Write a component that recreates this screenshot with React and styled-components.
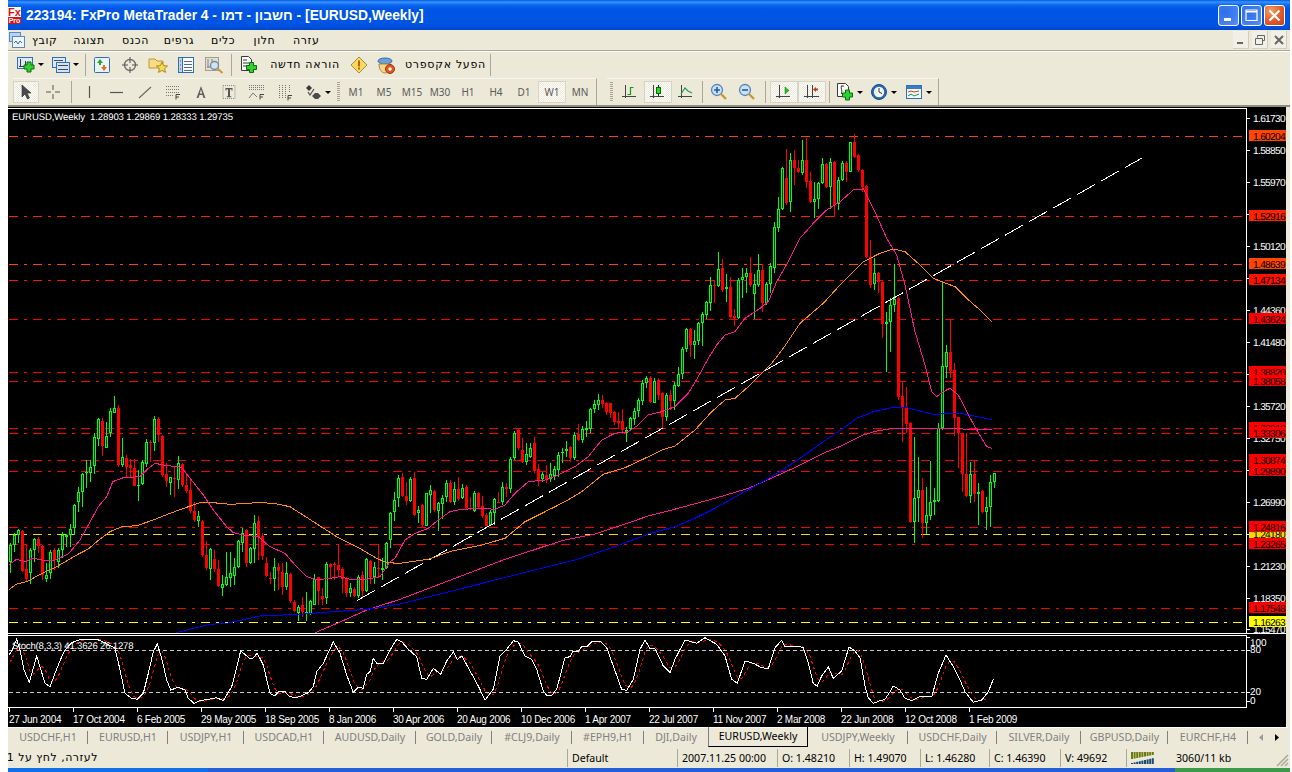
import React from 'react'
import styled, { createGlobalStyle } from 'styled-components'

const GlobalStyle = createGlobalStyle`
  html, body { margin: 0; padding: 0; background: #ffffff; }
  body { font-family: "Noto Sans", "Liberation Sans", sans-serif; }
`

const FONT = '"Noto Sans", "Liberation Sans", sans-serif'
const HEBREW = '"DejaVu Sans", "Liberation Sans", sans-serif'
const BEIGE = '#ece9d8'
const EDGE = '#aca899'

const Page = styled.div`
  width: 1292px;
  height: 772px;
  overflow: hidden;
  background: #ffffff;
`
const Window = styled.div`
  margin-left: 8px;
  width: 1282px;
  height: 772px;
  display: flex;
  flex-direction: column;
  background: ${BEIGE};
`
const TitleBar = styled.div`
  height: 30px;
  flex: none;
  display: flex;
  align-items: center;
  padding-right: 5px;
  box-sizing: border-box;
  background: linear-gradient(#0058e6 0, #3a93ff 2px, #0a66f0 5px, #0055e5 9px, #0055e5 22px, #0050dd 27px, #0046c8 30px);
`
const Logo = styled.div`
  width: 13px;
  height: 17px;
  margin-right: 5px;
  display: flex;
  flex-direction: column;
  font-family: "Liberation Sans", sans-serif;
  font-weight: 700;
  text-align: center;
`
const LogoTop = styled.span`
  height: 10px;
  line-height: 10px;
  font-size: 11px;
  background: #ffffff;
  color: #e01010;
`
const LogoBottom = styled.span`
  height: 7px;
  line-height: 7px;
  font-size: 7px;
  background: #e01010;
  color: #ffffff;
`
const TitleText = styled.div`
  flex: 1;
  font: 700 13.8px "Liberation Sans", sans-serif;
  color: #ffffff;
  white-space: nowrap;
`
const CaptionButton = styled.div`
  width: 21px;
  height: 21px;
  margin-left: 2px;
  box-sizing: border-box;
  border: 1px solid #ffffff;
  border-radius: 3px;
  background: ${(p) => (p.$close ? 'radial-gradient(circle at 30% 25%, #eea060, #e2592a 55%, #c8401a)' : 'radial-gradient(circle at 30% 30%, #2f6ee8, #3d7cf0 50%, #5a93f5)')};
  display: flex;
  align-items: center;
  justify-content: center;
`
const MenuBar = styled.div`
  height: 20px;
  flex: none;
  display: flex;
  align-items: center;
  padding-left: 1px;
  font: 11px ${HEBREW};
  letter-spacing: 0.6px;
  color: #000000;
`
const MenuItem = styled.span`
  margin-left: ${(p) => p.$gap}px;
  width: ${(p) => p.$w}px;
  text-align: center;
  white-space: nowrap;
`
const MdiButtons = styled.div`
  margin-left: auto;
  margin-right: 3px;
  display: flex;
  gap: 3px;
`
const MdiButton = styled.div`
  width: 15px;
  height: 17px;
  background: #f2f0e6;
  border-right: 1px solid #d0cdbc;
  border-bottom: 1px solid #d0cdbc;
  display: flex;
  align-items: center;
  justify-content: center;
`
const ToolRow = styled.div`
  flex: none;
  height: ${(p) => p.$h}px;
  box-sizing: border-box;
  display: flex;
  align-items: center;
  padding-left: 5px;
  border-top: ${(p) => (p.$top ? `1px solid ${EDGE}` : 'none')};
  box-shadow: ${(p) => (p.$top ? 'inset 0 1px 0 #ffffff' : 'none')};
  border-bottom: ${(p) => (p.$bottom ? '2px solid #8f8d80' : 'none')};
`
const ToolGroup = styled.div`
  display: flex;
  align-items: center;
  height: 27px;
  margin-left: ${(p) => p.$gap || 0}px;
  padding-right: ${(p) => p.$pad || 0}px;
  border-top: 1px solid #f6f5ee;
  border-right: ${(p) => (p.$end ? `1px solid ${EDGE}` : 'none')};
  box-sizing: border-box;
`
const ToolButton = styled.div`
  flex: none;
  width: ${(p) => p.$w || 28}px;
  height: 22px;
  margin-left: ${(p) => p.$gap || 0}px;
  box-sizing: border-box;
  display: flex;
  align-items: center;
  justify-content: center;
  gap: 3px;
  font: 10px ${FONT};
  color: #5a5a5a;
  ${(p) =>
    p.$active &&
    `
    background: repeating-conic-gradient(#ffffff 0 25%, #ece9d8 0 50%) 0 0 / 2px 2px;
    border: 2px solid #f4f3ec;
    outline: 1px solid #d6d3c4;
    outline-offset: -1px;
  `}
`
const TextButton = styled.div`
  flex: none;
  width: ${(p) => p.$w}px;
  margin-left: ${(p) => p.$gap || 0}px;
  font: 11px ${HEBREW};
  letter-spacing: 0.7px;
  color: #000000;
  text-align: center;
  white-space: nowrap;
`
const Separator = styled.div`
  flex: none;
  width: 1px;
  height: 22px;
  margin: 0 ${(p) => p.$m || 3}px;
  background: ${EDGE};
`
const Grip = styled.div`
  flex: none;
  width: 3px;
  height: 20px;
  margin: 0 ${(p) => p.$m || 2}px;
  background: repeating-linear-gradient(#a8a594 0 1px, transparent 1px 2px);
`
const Caret = styled.span`
  width: 0;
  height: 0;
  border-left: 3px solid transparent;
  border-right: 3px solid transparent;
  border-top: 3px solid #000000;
`
const ChartArea = styled.div`
  flex: none;
  width: 1278px;
  background: #000000;
  display: flex;
  flex-direction: column;
`
const Plot = styled.svg`
  display: block;
  shape-rendering: crispEdges;
`
const PlotText = styled.text`
  font: ${(p) => p.$size || 10}px "Liberation Sans", sans-serif;
  letter-spacing: ${(p) => p.$track || 0}px;
  fill: ${(p) => p.$fill || '#ffffff'};
  text-rendering: geometricPrecision;
`
const TimeAxis = styled.div`
  height: 19px;
  display: flex;
  padding-left: 1px;
  overflow: hidden;
`
const TimeCell = styled.div`
  position: relative;
  flex: none;
  width: 64px;
  padding-top: 5px;
  font: 10px/13px "Liberation Sans", sans-serif;
  letter-spacing: -0.25px;
  color: #ffffff;
  white-space: nowrap;
  &::before {
    content: '';
    position: absolute;
    left: 0;
    top: 0;
    width: 1px;
    height: 4px;
    background: #ffffff;
  }
`
const TabBar = styled.div`
  flex: none;
  height: 20px;
  width: 1280px;
  box-sizing: border-box;
  display: flex;
  align-items: stretch;
  border-top: 1px solid #ffffff;
  background: ${BEIGE};
  font: 10.6px/18px ${FONT};
`
const Tab = styled.div`
  flex: none;
  width: ${(p) => p.$w}px;
  box-sizing: border-box;
  text-align: center;
  white-space: nowrap;
  color: #808080;
  position: relative;
  ${(p) =>
    p.$sep &&
    `
    &::after {
      content: '';
      position: absolute;
      right: 0;
      top: 3px;
      width: 1px;
      height: 13px;
      background: #808080;
    }
  `}
  ${(p) =>
    p.$active &&
    `
    background: #ffffff;
    color: #000000;
    margin-top: -1px;
    height: 20px;
    border-right: 1px solid #000000;
    border-bottom: 1px solid #000000;
    border-left: 1px solid #808080;
    line-height: 19px;
  `}
`
const TabArrows = styled.div`
  flex: none;
  display: flex;
  align-items: center;
  gap: 12px;
  margin-left: 11px;
`
const StatusBar = styled.div`
  flex: none;
  height: 21px;
  width: 1282px;
  display: flex;
  align-items: center;
  font: 10.6px/20px ${FONT};
  color: #000000;
  white-space: nowrap;
  position: relative;
`
const StatusCell = styled.div`
  flex: none;
  width: ${(p) => p.$w}px;
  height: 18px;
  line-height: 18px;
  box-sizing: border-box;
  padding-left: 4px;
  border-left: 1px solid ${EDGE};
  display: flex;
  align-items: center;
`
const HelpText = styled.div`
  flex: none;
  width: 559px;
  height: 18px;
  line-height: 18px;
  overflow: hidden;
  display: flex;
  font-family: ${HEBREW};
  font-size: 11px;
  letter-spacing: 0.5px;
`
const HelpInner = styled.div`
  direction: rtl;
  width: 90px;
  flex: none;
  white-space: nowrap;
`
const SizeGrip = styled.svg`
  position: absolute;
  right: 1px;
  bottom: 1px;
`
const TaskStrip = styled.div`
  flex: none;
  height: 4px;
  display: flex;
  width: 1282px;
`
const TaskPart = styled.div`
  flex: ${(p) => (p.$w ? `none` : 1)};
  width: ${(p) => p.$w || 0}px;
  background: ${(p) => p.$color};
`

// toolbar drawings --------------------------------------------------------
const Ico = ({ w = 18, h = 18, children }) => (
  <svg width={w} height={h} viewBox={`0 0 ${w} ${h}`} style={{ display: 'block' }}>
    {children}
  </svg>
)
const GreenPlus = ({ x, y }) => (
  <path
    d={`M${x + 3} ${y}h4v3h3v4h-3v3h-4v-3h-3v-4h3z`}
    fill="#2fd12f"
    stroke="#0d6b0d"
    strokeWidth="1"
  />
)
const Mini = ({ x, y }) => (
  <g fill="none" stroke="#3a3a3a">
    <path d={`M${x + 1.5} ${y}v8M${x} ${y + 7.5}h10M${x + 6.5} ${y + 2}v5`} />
  </g>
)
const NewChartIcon = () => (
  <Ico>
    <rect x=".5" y="1.5" width="15" height="11" fill="#dbe9fb" stroke="#2f6fb5" />
    <Mini x={2} y={3} />
    <GreenPlus x={7} y={6} />
  </Ico>
)
const ProfilesIcon = () => (
  <Ico>
    <rect x=".5" y="1.5" width="13" height="10" fill="#dbe9fb" stroke="#2f6fb5" />
    <rect x="4.5" y="6.5" width="13" height="10" fill="#cfe2fa" stroke="#2f6fb5" />
    <path d="M6 9.5h10M6 13.5h10" stroke="#4a4a4a" />
    <path d="M2 4.5h9" stroke="#4a4a4a" />
  </Ico>
)
const WatchIcon = () => (
  <Ico>
    <rect x="1.5" y="1.5" width="15" height="15" rx="1" fill="#eaf3fc" stroke="#2f6fb5" />
    <path d="M7 3l3 4H8v2H6V7H4z" fill="#27a827" />
    <path d="M11 15l-3-4h2V9h2v2h2z" fill="#e2701a" />
  </Ico>
)
const CrossTargetIcon = () => (
  <Ico>
    <circle cx="9" cy="9" r="5.5" fill="none" stroke="#707070" strokeWidth="1.4" />
    <path d="M9 1v6M9 11v6M1 9h6M11 9h6" stroke="#555" />
  </Ico>
)
const FolderStarIcon = () => (
  <Ico w={20}>
    <path d="M1 3h6l2 2h6v7H1z" fill="#f6dc82" stroke="#b89a3a" />
    <path d="M14 6l1.6 3.6 3.9.4-2.9 2.6.9 3.8-3.5-2-3.5 2 .9-3.8-2.9-2.6 3.9-.4z" fill="#fbd94a" stroke="#a88a20" />
  </Ico>
)
const NavigatorIcon = () => (
  <Ico>
    <rect x="1.5" y="1.5" width="15" height="15" fill="#f6fafe" stroke="#2f6fb5" />
    <rect x="1.5" y="1.5" width="4" height="15" fill="#bcd6f2" stroke="#2f6fb5" />
    <path d="M7 5.5h8M7 8.5h8M7 11.5h8M7 14.5h8" stroke="#5a6a80" />
    <path d="M3 5h1M3 9h1M3 13h1" stroke="#d02020" />
  </Ico>
)
const TesterIcon = () => (
  <Ico w={19}>
    <rect x=".5" y="1.5" width="13" height="13" fill="#e2e0d4" stroke="#a09e90" />
    <path d="M3 3v9M7 3v9M2 11h10" stroke="#808080" />
    <circle cx="9.5" cy="9.5" r="4" fill="#cfe3f5" stroke="#7a8a9a" strokeWidth="1.4" />
    <path d="M12.5 12.5l5 4.5" stroke="#c89a30" strokeWidth="2" />
  </Ico>
)
const NewOrderIcon = () => (
  <Ico>
    <path d="M1.5.5h7l3 3v11h-10z" fill="#fbfbf8" stroke="#3a3a3a" />
    <path d="M3 4h4M3 7h6M3 10h4" stroke="#3a3a3a" />
    <GreenPlus x={6.5} y={6.5} />
  </Ico>
)
const WarnIcon = () => (
  <Ico>
    <path d="M9 1l8 8-8 8-8-8z" fill="#fbdb5a" stroke="#a08a50" />
    <path d="M8 4.5h2v6H8z" fill="#c85a10" />
    <path d="M8 11.5h2v2H8z" fill="#c85a10" />
  </Ico>
)
const ExpertIcon = () => (
  <Ico w={20}>
    <ellipse cx="9" cy="5" rx="7" ry="3" fill="#6aa0dc" stroke="#3a6aa0" />
    <path d="M3 8c0 6 3 9 6 9s6-3 6-9z" fill="#f5d58a" stroke="#a08a50" />
    <circle cx="14" cy="13" r="4.5" fill="#e0561a" stroke="#9a3a10" />
    <circle cx="14" cy="13" r="1.7" fill="#ffffff" />
  </Ico>
)
const ArrowIcon = () => (
  <Ico>
    <path d="M5 2l0 12 3-3 2.5 5 2-1-2.5-5 4 0z" fill="#4a4a4a" stroke="#2a2a2a" strokeWidth=".6" />
  </Ico>
)
const ThinCrossIcon = () => (
  <Ico>
    <path d="M9 2v5M9 11v5M2 9h5M11 9h5" stroke="#555" />
  </Ico>
)
const VLineIcon = () => (
  <Ico>
    <path d="M9.5 3v12" stroke="#555" strokeWidth="1.2" />
  </Ico>
)
const HLineIcon = () => (
  <Ico>
    <path d="M2 9.5h13" stroke="#555" strokeWidth="1.2" />
  </Ico>
)
const TrendIcon = () => (
  <Ico>
    <path d="M3 15L15 4" stroke="#666" strokeWidth="1.1" />
  </Ico>
)
const ChannelIcon = () => (
  <Ico>
    <path d="M2 3.5h13M2 6.5h13M2 9.5h13M2 12.5h8" stroke="#777" strokeDasharray="1 1" />
    <path d="M12 11.5h4M12 11.5v5M12 14h3" stroke="#444" fill="none" />
  </Ico>
)
const TextAIcon = () => (
  <Ico>
    <path d="M9 3l4.5 12h-2l-1-3h-3l-1 3h-2zM7.8 10.5h2.4L9 6.5z" fill="#606060" />
  </Ico>
)
const TextBoxIcon = () => (
  <Ico>
    <path d="M3 2.5h12v13H3z" fill="none" stroke="#888" strokeDasharray="1 1" />
    <path d="M5.5 5h7v2.5h-1V6.2H10v7h1.2v1H6.8v-1H8v-7H6.500v1.3h-1z" fill="#555" />
  </Ico>
)
const FibIcon = () => (
  <Ico>
    <path d="M1 2.5h15M1 4.5h15M1 6.500h15" stroke="#777" strokeDasharray="1 1" />
    <path d="M1 15l4-5 4 4" fill="none" stroke="#777" />
    <path d="M12 11.5h4M12 11.5v5M12 14h3" stroke="#444" fill="none" />
  </Ico>
)
const FibTimeIcon = () => (
  <Ico>
    <path d="M3.500 2v14M6.500 2v14M9.500 2v14M13.500 2v7" stroke="#777" strokeDasharray="1 1" />
    <path d="M12 12.500h4M12 12.500v5M12 15h3" stroke="#444" fill="none" />
  </Ico>
)
const ArrowsIcon = () => (
  <Ico>
    <path d="M5 2l3 3-3 3-3-3z" fill="#3a3a3a" />
    <path d="M8 13l3-3h3l3 3-3 3h-3z" fill="#4a4a4a" />
    <path d="M4 9l2 3 4-6" fill="none" stroke="#4a4a4a" strokeWidth="1.2" />
  </Ico>
)
const Axes = ({ x = 1, y = 2 }) => (
  <path d={`M${x + 3.5} ${y}v13M${x} ${y + 11.5}h14`} stroke="#444" fill="none" />
)
const BarChartIcon = () => (
  <Ico>
    <Axes />
    <path d="M9.500 4v8M9.500 11.500h-3M9.500 4.500h3" stroke="#1a9a1a" strokeWidth="1.2" />
  </Ico>
)
const CandleChartIcon = () => (
  <Ico>
    <Axes />
    <path d="M9.500 2v11" stroke="#222" />
    <rect x="7.500" y="4.500" width="4" height="6" fill="#22e022" stroke="#0a6a0a" />
  </Ico>
)
const LineChartIcon = () => (
  <Ico>
    <Axes />
    <path d="M4 11l4-6 3 3 4 2" fill="none" stroke="#2a9a5a" strokeWidth="1.2" />
  </Ico>
)
const ZoomIcon = ({ plus }) => (
  <Ico>
    <circle cx="7" cy="7" r="5.5" fill="#c8e0f8" stroke="#5a86b8" strokeWidth="1.3" />
    <path d={plus ? 'M4 7h6M7 4v6' : 'M4 7h6'} stroke="#2a5a9a" strokeWidth="1.6" />
    <path d="M11 11l5 5" stroke="#c89a30" strokeWidth="2.4" />
  </Ico>
)
const ScrollIcon = () => (
  <Ico>
    <Axes />
    <path d="M10 4l4 3.500-4 3.500z" fill="#22c022" stroke="#0a7a0a" strokeWidth=".5" />
  </Ico>
)
const ShiftIcon = () => (
  <Ico>
    <path d="M4.500 2v13M9.500 2v13M1 13.500h15" stroke="#444" fill="none" />
    <path d="M15 5.500v2h-2v1.500l-3-2.500 3-2.500v1.500z" fill="#c83a10" />
  </Ico>
)
const IndicatorIcon = () => (
  <Ico>
    <path d="M1.500.500h8l3 3v10h-11z" fill="#fbfbf8" stroke="#3a3a3a" />
    <path d="M5 3h3M5.500 3c-1 2 1 4 0 8" stroke="#3a3a3a" fill="none" />
    <GreenPlus x={6.500} y={7} />
  </Ico>
)
const ClockIcon = () => (
  <Ico>
    <circle cx="9" cy="9" r="7.500" fill="#2a6ab0" stroke="#1a4a90" />
    <circle cx="9" cy="9" r="5.200" fill="#f4f8fc" />
    <path d="M9 5v4l3 1.500" stroke="#333" fill="none" />
  </Ico>
)
const TemplateIcon = () => (
  <Ico>
    <rect x="1.500" y="2.500" width="15" height="13" fill="#f2f7fc" stroke="#2f6fb5" />
    <rect x="2" y="3" width="14" height="3" fill="#3a7cc4" />
    <path d="M3 9l3-1 3 1 5-1" stroke="#d04020" fill="none" />
    <path d="M3 13l3-2 3 2 5-2" stroke="#2a9a3a" fill="none" />
  </Ico>
)
const MenuDocIcon = () => (
  <Ico w={16} h={16}>
    <rect x=".5" y=".5" width="11" height="9" fill="#b8d4f4" stroke="#5a88c0" />
    <rect x="3.500" y="4.500" width="12" height="11" fill="#eef5fc" stroke="#5a88c0" />
    <path d="M5 11l2-2 2 3 2-3 2 2" fill="none" stroke="#3a6aa0" />
  </Ico>
)

// chart data: every row is [green, high, body top, body bottom, low] in pixels of a crop
const sliceA = [
  [1,490,495,545,580],[1,458,465,495,515],[1,447,450,465,490],[0,450,453,572,575],[0,495,568,597,605],[1,505,510,580,613],[1,475,478,510,545],[0,470,478,497,520],
  [0,495,498,585,600],[1,550,585,598,607],[1,510,515,580,597],[0,505,510,540,570],[1,505,510,545,563],[1,455,465,510,535],[1,463,465,470,500],[1,432,448,465,500],
  [1,372,375,443,465],[1,320,337,365,395],[1,280,283,337,382],[1,240,276,280,323],[1,240,262,280,305],[1,160,172,257,283],[1,115,118,178,198],[0,115,123,197,228],
  [1,125,168,205,205],[1,85,93,160,170],[1,48,85,98,100],[0,75,84,255,262],[1,175,232,254,262],[0,225,234,260,295],[0,238,255,263,290],[0,238,264,317,319],
  [1,270,315,319,362],[1,240,247,311,315],[1,178,187,253,260],[0,180,187,190,245],[1,108,118,190,212],[0,112,118,165,185],[0,165,168,285,290],[0,250,283,303,320],
  [1,290,292,310,345],[0,260,295,298,350],[1,228,250,300,328],[0,248,252,316,320],[0,285,316,333,338],[0,300,330,392,400],[0,365,393,420,425],[1,392,408,422,440],
  [0,420,423,525,532],[0,483,525,565,570],[1,503,507,567,600],[0,510,537,568,575],[0,540,567,618,622],[1,585,612,625,647],[1,517,592,614,617],[1,517,580,595,622],
  [1,533,562,587,615],[1,480,484,562,565],[1,445,458,490,515],[0,448,450,550,560],[1,500,505,550,552],[1,405,428,508,548],[0,407,424,470,540],[0,460,467,527,540],
  [0,530,549,588,590],[0,575,593,596,613],[1,535,562,596,633],[0,550,562,574,630],[0,550,576,620,645],[1,545,580,622,630],[0,580,582,663,670],[0,660,666,693,695],
  [1,675,680,698,722],[0,650,676,695,710],[1,635,696,702,722],[1,660,664,702,705],[1,583,598,674,675],[0,590,592,632,675],[0,625,648,657,675],[1,545,552,654,672],
  [0,548,552,560,595],[0,545,552,555,600],[0,493,556,570,590],[0,560,568,597,640],[0,590,594,638,650],[1,610,625,638,650],[0,620,628,648,650],[1,585,592,648,655],
  [0,572,586,634,655],[1,533,538,632,635],[0,540,543,590,612],[1,545,562,592,612],[0,493,565,568,595],[1,535,564,569,600],[1,487,490,564,566],[1,395,400,480,505],
  [1,335,360,395,424],
]
const sliceB = [
  [1,735,745,805,832],[0,730,740,798,800],[0,755,798,812,825],[1,742,747,813,815],[0,727,745,855,858],[1,828,840,850,880],[0,822,825,885,895],[1,788,790,887,888],
  [1,765,780,795,850],[0,780,782,840,845],[1,815,820,842,902],[1,795,805,822,868],[1,750,760,800,815],[0,750,760,815,820],[1,755,778,815,825],[0,742,778,808,812],
  [1,763,773,803,808],[0,765,770,835,838],[0,800,835,838,840],[1,782,790,842,845],[0,785,790,830,835],[0,798,827,858,865],[0,850,855,888,892],[1,840,847,885,888],
  [1,803,808,850,885],[0,785,815,820,820],[1,755,772,815,825],[0,760,770,778,800],[1,680,687,778,790],[1,603,610,685,690],[0,598,600,655,660],[0,625,660,695,700],
  [1,640,672,695,705],[1,640,653,680,685],[0,622,640,722,728],[0,702,718,750,767],[1,725,733,747,755],[0,705,735,748,760],[1,700,733,748,755],[1,708,718,738,750],
  [1,665,675,720,740],[1,655,665,670,700],[1,633,658,662,680],[0,648,650,683,697],[1,605,615,685,690],[0,582,612,630,632],[1,588,597,630,640],[1,573,595,600,620],
  [1,533,537,597,610],[1,510,522,537,550],[1,492,510,525,540],[0,495,510,522,535],[0,515,518,545,555],[0,520,520,550,565],[0,543,545,575,585],[0,545,572,580,597],
  [0,537,573,600,612],[1,590,600,608,635],[1,562,565,598,600],[1,535,542,567,585],[1,505,510,543,560],[1,450,460,512,525],[1,438,443,460,475],[0,438,443,515,520],
  [1,445,453,518,520],[0,443,450,495,510],[0,487,490,560,595],[1,490,495,562,572],[0,480,495,513,540],[1,455,465,513,540],[1,412,433,467,470],[1,350,358,433,447],
  [1,293,297,358,365],[0,293,297,345,382],[1,300,332,345,387],[1,275,280,332,345],[1,245,252,280,348],[1,213,217,255,268],[1,140,165,220,243],[0,150,165,167,220],
  [1,67,118,167,170],[0,88,115,180,185],[1,133,172,178,217],[0,140,172,262,265],[0,238,258,265,287],[1,145,150,265,268],[1,115,142,150,205],[1,113,128,142,190],
  [0,82,130,165,170],[1,133,163,192,268],[1,72,120,165,170],[0,103,120,218,245],[1,155,163,218,225],[1,100,108,163,190],
]
const sliceC = [
  [1,290,305,428,445],[1,215,252,308,320],[1,125,130,253,255],[0,72,158,235,240],[1,85,105,232,260],[0,75,105,130,180],[0,105,130,142,145],[1,45,105,143,150],
  [0,38,105,170,190],[0,140,168,230,235],[1,170,223,230,278],[1,170,175,223,252],[1,100,118,175,178],[0,115,118,185,190],[1,100,112,185,252],[0,108,112,240,275],
  [1,155,165,238,255],[1,108,115,165,168],[0,108,115,140,170],[1,52,52,140,142],[0,28,52,95,100],[0,88,90,135,140],[0,133,135,185,200],[0,180,183,395,400],
  [0,345,395,480,490],[1,400,445,478,495],[0,440,445,472,505],[0,465,470,597,640],[1,560,592,597,742],[1,520,540,592,680],[1,418,522,540,560],[0,515,518,815,825],
  [0,772,813,845,950],[0,785,848,897,925],[0,890,895,1192,1195],[1,935,1120,1192,1255],[1,995,1095,1120,1190],[0,1060,1095,1193,1240],[1,1085,1170,1193,1228],[1,1008,1132,1172,1185],
  [1,1088,1125,1132,1170],[1,895,910,1128,1130],[1,470,723,910,915],[1,660,682,725,760],[0,585,682,738,760],[0,715,735,878,932],[0,875,877,925,1030],[0,923,925,1048,1100],
  [0,925,1048,1113,1115],[1,1010,1048,1112,1133],[0,1008,1048,1108,1130],[1,1075,1100,1108,1200],[0,1095,1098,1160,1165],[1,1115,1145,1160,1215],[1,1050,1072,1145,1205],[1,1045,1045,1072,1090],
]
const shift = (rows, top) =>
  rows.map(([up, ...ys]) => [up, ...ys.map((v) => Math.round(top + v / 3))])
const candles = [...shift(sliceA, 380), ...shift(sliceB, 230), ...shift(sliceC, 125)]

const pts = (raw, left, top) => raw.map(([x, y]) => [left + x / 3, top + y / 3])
const fromA = (raw) => pts(raw, 0, 380)
const fromB = (raw) => pts(raw, 395, 230)
const fromC = (raw) => pts(raw, 760, 125)
const toLine = (list) => list.map(([x, y]) => `${x.toFixed(1)},${y.toFixed(1)}`).join(' ')

const fastMa = [
  ...fromA([[28,553],[50,538],[75,545],[100,535],[125,540],[160,542],[205,522],[240,480],[265,435],[295,380],[320,350],[338,305],[370,293],[420,290],[445,265],[465,250],[490,255],[545,262],[570,295],[610,345],[640,390],[680,440],[700,458],[730,465],[775,470],[810,500],[855,520],[885,555],[920,590],[950,600],[990,595],[1020,590],[1060,600],[1100,598],[1140,590],[1170,545]]),
  ...fromB([[0,985],[30,930],[60,910],[100,895],[130,870],[165,845],[200,838],[260,835],[300,838],[330,825],[360,790],[400,755],[450,750],[490,735],[540,710],[580,680],[620,630],[660,610],[700,605],[730,585],[760,555],[800,545],[840,530],[880,490],[910,440],[940,385],[965,345],[990,315],[1020,305],[1050,265]]),
  ...fromC([[0,550],[25,530],[50,470],[85,410],[120,340],[160,295],[200,255],[240,230],[280,195],[310,192],[340,250],[380,340],[410,390],[435,480],[465,620],[495,720],[515,800],[530,815],[550,800],[570,790],[595,810],[620,860],[650,915],[680,965],[697,970]]),
]
const orangeMa = [
  ...fromA([[28,628],[50,612],[80,605],[130,578],[170,560],[230,525],[265,507],[290,485],[330,455],[365,440],[410,437],[460,420],[510,400],[560,382],[600,368],[640,368],[690,373],[730,371],[780,367],[830,372],[870,380],[920,412],[960,438],[1010,470],[1070,500],[1130,535],[1160,548],[1200,550]]),
  ...fromB([[100,988],[170,963],[260,945],[330,925],[390,875],[450,845],[510,815],[560,785],[625,733],[690,713],[760,680],[800,660],[840,648],[900,600],[950,545],[990,510],[1020,505],[1060,470]]),
  ...fromC([[0,750],[35,715],[70,670],[120,595],[190,535],[240,480],[270,450],[310,410],[360,385],[400,372],[435,380],[480,420],[520,460],[550,472],[585,485],[620,520],[660,555],[697,592]]),
]
const blueMa = [
  ...fromA([[528,758],[630,733],[680,730],[780,708],[900,703],[1000,695],[1100,688],[1200,672]]),
  ...fromB([[540,990],[660,950],[760,912],[840,890],[900,865],[960,835],[1040,790]]),
  ...fromC([[0,1075],[60,1040],[120,1000],[190,950],[250,910],[290,880],[340,860],[400,847],[440,848],[520,868],[600,865],[697,884]]),
]
const slowMa = [
  ...fromA([[945,758],[1000,735],[1100,690],[1200,658]]),
  ...fromB([[330,988],[400,965],[500,932],[600,912],[690,882],[760,858],[850,835],[960,805],[1060,775]]),
  ...fromC([[0,1075],[100,1030],[190,985],[250,960],[310,930],[350,918],[400,910],[697,913]]),
]

const stochMain = [
  ...pts([[28,75],[40,52],[50,28],[60,60],[72,120],[88,157],[100,115],[110,78],[122,118],[135,160],[150,170],[165,130],[180,92],[195,60],[215,38],[245,27],[290,28],[315,38],[345,55],[358,110],[375,190],[395,205],[412,208],[430,190],[445,130],[460,65],[472,42],[485,85],[500,150],[512,180],[535,172],[555,180],[565,205],[582,220],[600,212],[625,208],[650,203],[670,212],[695,170],[708,120],[722,62],[748,85],[758,85],[772,70],[790,105],[810,190],[825,198],[835,185],[855,185],[870,200],[890,203],[925,188],[940,170],[950,125],[970,100],[1000,35],[1020,70],[1040,135],[1060,187],[1075,172],[1090,175],[1100,133],[1110,125],[1120,85],[1130,100],[1150,100],[1170,60],[1190,28],[1205,35],[1225,58],[1250,80],[1265,145],[1280,148]], 0, 630),
  ...pts([[100,97],[122,115],[140,75],[160,48],[172,70],[185,60],[205,95],[235,150],[255,192],[280,160],[300,60],[320,40],[340,14],[355,18],[375,60],[395,70],[410,100],[430,165],[440,178],[455,178],[470,160],[495,65],[510,62],[520,45],[535,45],[545,32],[560,32],[575,17],[600,15],[620,35],[640,90],[665,160],[680,163],[700,130],[720,40],[735,12],[750,38],[765,38],[790,90],[810,110],[825,70],[855,12],[890,22],[915,5],[950,25],[975,60],[995,130],[1012,142],[1035,75],[1060,82],[1085,95],[1105,98],[1125,35],[1145,13],[1155,33],[1175,32],[1190,30],[1210,35],[1225,80],[1240,143],[1252,150],[1265,120],[1285,93],[1300,127],[1325,105],[1347,33],[1365,45],[1380,65],[1395,150],[1405,185],[1420,202],[1438,195]], 400, 636),
  ...pts([[75,208],[90,185],[100,168],[120,180],[135,205],[155,212],[180,200],[215,200],[235,130],[258,75],[280,110],[300,150],[315,185],[340,217],[365,210],[385,185],[400,148]], 860, 630),
]
// signal line: 3 bar average of the main line
const sampleAt = (x) => {
  for (let i = 1; i < stochMain.length; i++) {
    const [x0, y0] = stochMain[i - 1]
    const [x1, y1] = stochMain[i]
    if (x <= x1) return y0 + ((y1 - y0) * (x - x0)) / Math.max(x1 - x0, 0.01)
  }
  return stochMain[stochMain.length - 1][1]
}
const stochSignal = []
for (let x = 9.5; x < 988; x += 4) {
  stochSignal.push([x + 0.5, (sampleAt(x) + sampleAt(x - 4) + sampleAt(x - 8)) / 3])
}

const levels = [
  { y: 136, text: '1.60204', color: '#ff4500' },
  { y: 216, text: '1.52916', color: '#ff2200' },
  { y: 264, text: '1.48639', color: '#ff4500' },
  { y: 280, text: '1.47134', color: '#ff1100' },
  { y: 319, text: '1.43624', color: '#ff0000' },
  { y: 372, text: '1.38820', color: '#ff0000' },
  { y: 381, text: '1.38058', color: '#ff0000' },
  { y: 428, text: '1.33918', color: '#ff0000' },
  { y: 433, text: '1.33306', color: '#ff0000' },
  { y: 460, text: '1.30874', color: '#ff0000' },
  { y: 471, text: '1.29890', color: '#ff0000' },
  { y: 534, text: '1.24180', color: '#ffd700' },
  { y: 527, text: '1.24816', color: '#ff0000' },
  { y: 544, text: '1.23265', color: '#ff0000' },
  { y: 608, text: '1.17548', color: '#ff0000' },
  { y: 622, text: '1.16263', color: '#ffff00' },
]
const scale = [
  ['1.61730', 118], ['1.58850', 150], ['1.55970', 182], ['1.53090', 214], ['1.50120', 246], ['1.47240', 278],
  ['1.44360', 310], ['1.41480', 342], ['1.38600', 374], ['1.35720', 406], ['1.32750', 438], ['1.29870', 470],
  ['1.26990', 502], ['1.24110', 534], ['1.21230', 566], ['1.18350', 598], ['1.15470', 629],
]
const dates = ['27 Jun 2004','17 Oct 2004','6 Feb 2005','29 May 2005','18 Sep 2005','8 Jan 2006','30 Apr 2006','20 Aug 2006','10 Dec 2006','1 Apr 2007','22 Jul 2007','11 Nov 2007','2 Mar 2008','22 Jun 2008','12 Oct 2008','1 Feb 2009']
const tabs = [
  ['USDCHF,H1', 80, 1], ['EURUSD,H1', 80, 1], ['USDJPY,H1', 76, 1], ['USDCAD,H1', 80, 1], ['AUDUSD,Daily', 92, 1], ['GOLD,Daily', 76, 1],
  ['#CLJ9,Daily', 80, 1], ['#EPH9,H1', 72, 1], ['DJI,Daily', 64, 0], ['EURUSD,Weekly', 100, 0], ['USDJPY,Weekly', 100, 1], ['USDCHF,Daily', 89, 1],
  ['SILVER,Daily', 84, 1], ['GBPUSD,Daily', 87, 1], ['EURCHF,H4', 80, 1],
]
const periods = ['M1', 'M5', 'M15', 'M30', 'H1', 'H4', 'D1', 'W1', 'MN']

const MainChart = () => (
  <Plot width="1278" height="527" viewBox="8 107 1278 527">
    <rect x="8" y="108" width="1239" height="1" fill="#ffffff" />
    {levels.map((l) => (
      <line key={l.text} x1="9" x2="1246" y1={l.y + 0.5} y2={l.y + 0.5} stroke={l.color} strokeDasharray="9 6 3 6" />
    ))}
    {candles.map(([up, hi, top, bot, lo], k) => {
      const x = 9 + 4 * k
      const c = up ? '#00ff00' : '#ff0000'
      return (
        <g key={k}>
          <rect x={x + 1} y={hi} width="1" height={lo - hi} fill={c} />
          <rect x={x} y={top} width="3" height={Math.max(bot - top, 1)} fill={c} />
          {up && bot - top > 2 ? <rect x={x + 1} y={top + 1} width="1" height={bot - top - 2} fill="#06284e" /> : null}
        </g>
      )
    })}
    <line x1="357" y1="600.5" x2="1142" y2="158" stroke="#ffffff" strokeDasharray="21 6.55" />
    <polyline points={toLine(slowMa)} fill="none" stroke="#ff1493" />
    <polyline points={toLine(blueMa)} fill="none" stroke="#0000ff" />
    <polyline points={toLine(orangeMa)} fill="none" stroke="#ff8c00" />
    <polyline points={toLine(fastMa)} fill="none" stroke="#ff1493" />
    <PlotText x="12" y="120" $size={9.6} $track={-0.12}>EURUSD,Weekly&#160;&#160;1.28903 1.29869 1.28333 1.29735</PlotText>
    <rect x="1246" y="108" width="1" height="526" fill="#ffffff" />
    <rect x="8" y="633" width="1278" height="1" fill="#ffffff" />
    {scale.map(([label, y]) => (
      <g key={label}>
        <rect x="1247" y={y} width="3" height="1" fill="#ffffff" />
        <PlotText x="1253" y={y + 4} $size={10.2} $track={-0.68}>{label}</PlotText>
      </g>
    ))}
    {levels.map((l) => (
      <g key={l.text}>
        <rect x="1249" y={l.y - 6} width="37" height="11" fill={l.color} />
        <PlotText x="1253" y={l.y + 3.500} $size={10.2} $track={-0.68} $fill="#000000">{l.text}</PlotText>
      </g>
    ))}
  </Plot>
)

const StochChart = () => (
  <Plot width="1278" height="74" viewBox="8 634 1278 74">
    <rect x="8" y="635" width="1239" height="1" fill="#ffffff" />
    <line x1="9" x2="1246" y1="650.5" y2="650.5" stroke="#c8c8c8" strokeDasharray="4 3" />
    <line x1="9" x2="1246" y1="692.5" y2="692.5" stroke="#c8c8c8" strokeDasharray="4 3" />
    <polyline points={toLine(stochSignal)} fill="none" stroke="#ff0000" strokeDasharray="3 3" />
    <polyline points={toLine(stochMain)} fill="none" stroke="#ffffff" />
    <PlotText x="12" y="649" $size={9.6} $track={-0.2}>Stoch(8,3,3) 41.3626 26.1278</PlotText>
    <rect x="1246" y="635" width="1" height="73" fill="#ffffff" />
    <rect x="8" y="707" width="1239" height="1" fill="#ffffff" />
    {[['100', 646, 637], ['80', 653, 650], ['20', 695, 692], ['0', 704, 701]].map(([t, y, tick]) => (
      <g key={t}>
        <rect x="1247" y={tick} width="3" height="1" fill="#ffffff" />
        <PlotText x="1250" y={y}>{t}</PlotText>
      </g>
    ))}
  </Plot>
)

const App = () => (
  <Page>
    <GlobalStyle />
    <Window>
      <TitleBar>
        <Logo>
          <LogoTop>Fx</LogoTop>
          <LogoBottom>Pro</LogoBottom>
        </Logo>
        <TitleText>223194: FxPro MetaTrader 4 - חשבון - דמו - [EURUSD,Weekly]</TitleText>
        <CaptionButton>
          <svg width="15" height="15" viewBox="0 0 15 15"><rect x="3" y="10" width="7" height="3" fill="#fff" /></svg>
        </CaptionButton>
        <CaptionButton>
          <svg width="15" height="15" viewBox="0 0 15 15"><path d="M2 3.5h11v9h-11zM2 2h11v2H2z" fill="none" stroke="#fff" strokeWidth="1.2" /></svg>
        </CaptionButton>
        <CaptionButton $close>
          <svg width="15" height="15" viewBox="0 0 15 15"><path d="M2.500 2.500l10 10M12.500 2.500l-10 10" stroke="#fff" strokeWidth="2.200" /></svg>
        </CaptionButton>
      </TitleBar>
      <MenuBar>
        <MenuDocIcon />
        <MenuItem $gap={7} $w={25}>קובץ</MenuItem>
        <MenuItem $gap={16} $w={32}>תצוגה</MenuItem>
        <MenuItem $gap={17} $w={25}>הכנס</MenuItem>
        <MenuItem $gap={16} $w={32}>גרפים</MenuItem>
        <MenuItem $gap={16} $w={24}>כלים</MenuItem>
        <MenuItem $gap={17} $w={25}>חלון</MenuItem>
        <MenuItem $gap={16} $w={24}>עזרה</MenuItem>
        <MdiButtons>
          <MdiButton><svg width="10" height="10" viewBox="0 0 10 10"><rect x="1" y="7" width="6" height="2" fill="#666" /></svg></MdiButton>
          <MdiButton><svg width="12" height="12" viewBox="0 0 12 12"><path d="M3.500 3.500V1.500h7v5h-2M1.500 4.500h7v6h-7z" fill="none" stroke="#666" /></svg></MdiButton>
          <MdiButton><svg width="10" height="10" viewBox="0 0 10 10"><path d="M1 1l8 8M9 1l-8 8" stroke="#666" strokeWidth="2" /></svg></MdiButton>
        </MdiButtons>
      </MenuBar>
      <ToolRow $h={28} $top>
        <ToolButton $w={35}><NewChartIcon /><Caret /></ToolButton>
        <ToolButton $w={35}><ProfilesIcon /><Caret /></ToolButton>
        <Separator $m={2} />
        <ToolButton><WatchIcon /></ToolButton>
        <ToolButton><CrossTargetIcon /></ToolButton>
        <ToolButton><FolderStarIcon /></ToolButton>
        <ToolButton><NavigatorIcon /></ToolButton>
        <ToolButton><TesterIcon /></ToolButton>
        <Separator $m={3} />
        <ToolButton><NewOrderIcon /></ToolButton>
        <TextButton $w={70} $gap={7}>הוראה חדשה</TextButton>
        <ToolButton $w={28} $gap={5}><WarnIcon /></ToolButton>
        <ToolButton $w={26}><ExpertIcon /></ToolButton>
        <TextButton $w={80} $gap={6}>הפעל אקספרט</TextButton>
        <Separator $m={5} />
      </ToolRow>
      <ToolRow $h={29} $bottom>
        <ToolGroup $end $pad={2}>
          <ToolButton $w={26} $active><ArrowIcon /></ToolButton>
          <ToolButton><ThinCrossIcon /></ToolButton>
          <Separator $m={3.5} />
          <ToolButton><VLineIcon /></ToolButton>
          <ToolButton><HLineIcon /></ToolButton>
          <ToolButton><TrendIcon /></ToolButton>
          <ToolButton><ChannelIcon /></ToolButton>
          <ToolButton><TextAIcon /></ToolButton>
          <ToolButton><TextBoxIcon /></ToolButton>
          <ToolButton><FibIcon /></ToolButton>
          <ToolButton><FibTimeIcon /></ToolButton>
          <ToolButton $w={36}><ArrowsIcon /><Caret /></ToolButton>
          <Grip $m={2} />
          {periods.map((p) => (
            <ToolButton key={p} $active={p === 'W1'}>{p}</ToolButton>
          ))}
        </ToolGroup>
        <ToolGroup $gap={10} $end $pad={2}>
          <Grip $m={3} />
          <ToolButton><BarChartIcon /></ToolButton>
          <ToolButton $active><CandleChartIcon /></ToolButton>
          <ToolButton><LineChartIcon /></ToolButton>
          <Separator $m={2} />
          <ToolButton><ZoomIcon plus /></ToolButton>
          <ToolButton><ZoomIcon /></ToolButton>
          <Separator $m={4} />
          <ToolButton $active><ScrollIcon /></ToolButton>
          <ToolButton $active><ShiftIcon /></ToolButton>
          <Separator $m={3} />
          <ToolButton $w={32}><IndicatorIcon /><Caret /></ToolButton>
          <ToolButton $w={36}><ClockIcon /><Caret /></ToolButton>
          <ToolButton $w={35}><TemplateIcon /><Caret /></ToolButton>
        </ToolGroup>
      </ToolRow>
      <ChartArea>
        <MainChart />
        <StochChart />
        <TimeAxis>
          {dates.map((d) => (
            <TimeCell key={d}>{d}</TimeCell>
          ))}
        </TimeAxis>
      </ChartArea>
      <TabBar>
        {tabs.map(([name, w, sep]) => (
          <Tab key={name} $w={w} $sep={sep} $active={name === 'EURUSD,Weekly'}>{name}</Tab>
        ))}
        <TabArrows>
          <svg width="4" height="7" viewBox="0 0 4 7"><path d="M4 0v7L0 3.500z" fill="#9a9a9a" /></svg>
          <svg width="4" height="7" viewBox="0 0 4 7"><path d="M0 0v7l4-3.500z" fill="#000" /></svg>
        </TabArrows>
      </TabBar>
      <StatusBar>
        <HelpText><HelpInner>לעזרה, לחץ על F1</HelpInner></HelpText>
        <StatusCell $w={110}>Default</StatusCell>
        <StatusCell $w={100}>2007.11.25 00:00</StatusCell>
        <StatusCell $w={72}>O: 1.48210</StatusCell>
        <StatusCell $w={71}>H: 1.49070</StatusCell>
        <StatusCell $w={69}>L: 1.46280</StatusCell>
        <StatusCell $w={71}>C: 1.46390</StatusCell>
        <StatusCell $w={66}>V: 49692</StatusCell>
        <StatusCell $w={50}>
          <svg width="24" height="12" viewBox="0 0 24 12">
            {Array.from({ length: 9 }, (_, i) => (
              <g key={i}>
                <rect x={i * 2.6} y="0" width="2" height={7 - i * 0.5} fill="#6b7a10" />
                <rect x={i * 2.6} y={11 - i * 0.6} width="2" height={1 + i * 0.6} fill="#1a4a78" />
              </g>
            ))}
          </svg>
        </StatusCell>
        <span>3060/11 kb</span>
        <SizeGrip width="14" height="14" viewBox="0 0 14 14">
          <path d="M13 2L2 13M13 6L6 13M13 10l-3 3" stroke="#aca899" strokeWidth="1.500" />
        </SizeGrip>
      </StatusBar>
      <TaskStrip>
        <TaskPart $w={200} $color="#1170e8" />
        <TaskPart $color="#245edb" />
        <TaskPart $w={115} $color="#3c9a4a" />
      </TaskStrip>
    </Window>
  </Page>
)

export default App
